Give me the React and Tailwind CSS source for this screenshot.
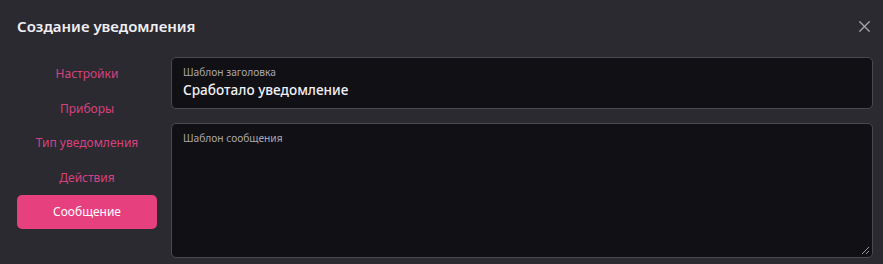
import { X } from 'lucide-react'

const NAV = ['Настройки', 'Приборы', 'Тип уведомления', 'Действия']

export default function App() {
  return (
    <div className="w-[883px] h-[264px] overflow-hidden bg-[#2b2a30] font-['Noto_Sans',sans-serif]">
      <div className="flex items-center justify-between pl-[17px] pr-[9px] h-[52px]">
        <h2 className="text-[15px] font-semibold text-[#f0eff3]">Создание уведомления</h2>
        <X size={19} strokeWidth={1.5} className="text-[#a8a7ad]" />
      </div>
      <div className="flex gap-[14px] pl-[17px] pr-[10px] pt-[5px]">
        <div className="w-[140px] flex flex-col">
          {NAV.map((item) => (
            <div key={item} className="h-[34.5px] flex items-center justify-center text-[12px] text-[#d6427f]">
              {item}
            </div>
          ))}
          <button className="h-[34px] rounded-[5px] bg-[#e6407f] text-white text-[12px]">Сообщение</button>
        </div>
        <div className="flex-1 flex flex-col gap-[14px]">
          <div className="h-[52px] rounded-[5px] border border-[#4a4950] bg-[#111015] px-[11px] pt-[7px]">
            <div className="text-[10.2px] leading-[14px] text-[#a9a8ae]">Шаблон заголовка</div>
            <div className="text-[13.6px] leading-[22px] font-medium text-[#f2f1f5]">Сработало уведомление</div>
          </div>
          <div className="relative h-[135px] rounded-[5px] border border-[#4a4950] bg-[#111015] px-[11px] pt-[7px]">
            <div className="text-[10.2px] leading-[14px] text-[#a9a8ae]">Шаблон сообщения</div>
            <svg className="absolute right-[2px] bottom-[2px]" width="9" height="9" viewBox="0 0 9 9">
              <path d="M8 1L1 8M8 5L5 8" stroke="#9a99a0" strokeWidth="1" />
            </svg>
          </div>
        </div>
      </div>
    </div>
  )
}
